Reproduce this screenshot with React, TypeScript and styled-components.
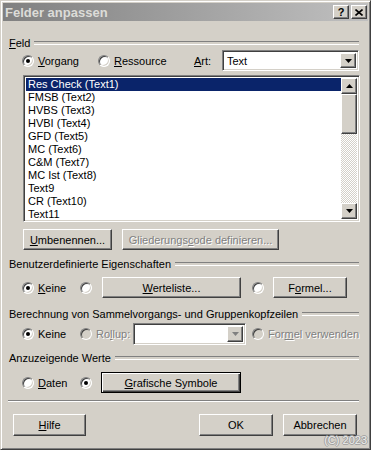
import React, { ReactElement } from 'react';
import styled, { createGlobalStyle, css } from 'styled-components';

const FACE = '#d4d0c8';

const GlobalStyle = createGlobalStyle`
  html, body {
    margin: 0;
    padding: 0;
    background: ${FACE};
  }
  body {
    font-family: "Liberation Sans", Arial, sans-serif;
    font-size: 11px;
    color: #000;
  }
  * {
    box-sizing: border-box;
  }
`;

const raised = css`
  border: 1px solid;
  border-color: #fff #404040 #404040 #fff;
  box-shadow: inset -1px -1px #808080;
  background: ${FACE};
`;

const sunken = css`
  border: 1px solid;
  border-color: #808080 #fff #fff #808080;
  box-shadow: inset 1px 1px #404040, inset -1px -1px ${FACE};
`;

const grayText = css`
  color: #808080;
  text-shadow: 1px 1px #fff;
`;

const Window = styled.div`
  position: relative;
  width: 371px;
  height: 450px;
  background: ${FACE};
  border: 1px solid;
  border-color: ${FACE} #404040 #404040 ${FACE};
  box-shadow: inset 1px 1px #fff, inset -1px -1px #808080;
  padding: 2px;
  display: flex;
  flex-direction: column;
`;

const TitleBar = styled.div`
  height: 18px;
  display: flex;
  align-items: center;
  gap: 2px;
  padding: 0 1px 0 2px;
  background: linear-gradient(to right, #808080, #c0c0c0);
`;

const Title = styled.span`
  flex: 1;
  color: #dcdcd8;
  font-weight: bold;
  font-size: 13px;
`;

const CaptionButton = styled.div`
  ${raised};
  width: 16px;
  height: 14px;
  display: flex;
  align-items: center;
  justify-content: center;
  font-weight: bold;
  font-size: 11px;
  line-height: 1;
`;

const Body = styled.div`
  flex: 1;
  display: flex;
  flex-direction: column;
  padding: 0 9px 0 6px;
`;

const GroupHeader = styled.div<{ $top: number }>`
  display: flex;
  align-items: center;
  height: 13px;
  margin-top: ${p => p.$top}px;
  white-space: nowrap;

  &::after {
    content: '';
    flex: 1;
    height: 2px;
    margin-left: 4px;
    border-top: 1px solid #808080;
    border-bottom: 1px solid #fff;
  }
`;

const Row = styled.div<{ $top: number; $h?: number; $indent?: number }>`
  display: flex;
  align-items: center;
  height: ${p => p.$h ?? 21}px;
  margin-top: ${p => p.$top}px;
  padding-left: ${p => p.$indent ?? 13}px;
  white-space: nowrap;
`;

const Accel = styled.span`
  text-decoration: underline;
  text-underline-offset: 1px;
`;

const Option = styled.label<{ $w?: number; $gap?: number; $disabled?: boolean }>`
  display: flex;
  align-items: center;
  gap: 4px;
  flex: none;
  width: ${p => (p.$w ? `${p.$w}px` : 'auto')};
  margin-left: ${p => p.$gap ?? 0}px;
  ${p => p.$disabled && grayText};
`;

const RadioDot = styled.span<{ $checked?: boolean; $disabled?: boolean }>`
  position: relative;
  flex: none;
  width: 12px;
  height: 12px;
  border-radius: 50%;
  border: 1px solid;
  border-color: #808080 #fff #fff #808080;
  background: ${p => (p.$disabled ? FACE : '#fff')};
  box-shadow: inset 1px 1px #404040, inset -1px -1px ${FACE};
  text-shadow: none;

  ${p =>
    p.$checked &&
    css`
      &::after {
        content: '';
        position: absolute;
        left: 3px;
        top: 3px;
        width: 4px;
        height: 4px;
        border-radius: 50%;
        background: #000;
      }
    `}
`;

const PushButton = styled.button<{ $w: number; $default?: boolean; $gap?: number }>`
  ${raised};
  width: ${p => p.$w}px;
  height: 100%;
  margin: 0 0 0 ${p => p.$gap ?? 0}px;
  padding: 0;
  font: inherit;
  color: #000;
  flex: none;

  ${p =>
    p.$default &&
    css`
      border: 1px solid #000;
      box-shadow: inset 1px 1px #fff, inset -1px -1px #404040, inset -2px -2px #808080;
    `}

  &:disabled {
    ${grayText};
  }
`;

const FieldLabel = styled.span<{ $w: number }>`
  width: ${p => p.$w}px;
  flex: none;
`;

const Combo = styled.div<{ $w: number }>`
  ${sunken};
  display: flex;
  align-items: stretch;
  width: ${p => p.$w}px;
  height: 100%;
  padding: 2px;
  background: #fff;
  flex: none;
`;

const ComboText = styled.span`
  flex: 1;
  padding-left: 2px;
  display: flex;
  align-items: center;
`;

const ArrowButton = styled.div<{ $h?: number }>`
  ${raised};
  width: 16px;
  height: ${p => (p.$h ? `${p.$h}px` : 'auto')};
  flex: none;
  display: flex;
  align-items: center;
  justify-content: center;
`;

const ListBox = styled.div`
  ${sunken};
  display: flex;
  width: 337px;
  height: 147px;
  margin: 4px 0 0 14px;
  padding: 2px;
  background: #fff;
`;

const Items = styled.div`
  flex: 1;
  overflow: hidden;
`;

const Item = styled.div<{ $selected?: boolean }>`
  height: 13px;
  line-height: 13px;
  padding-left: 2px;
  white-space: nowrap;
  background: ${p => (p.$selected ? '#0a246a' : 'transparent')};
  color: ${p => (p.$selected ? '#fff' : '#000')};
`;

const ScrollBar = styled.div`
  width: 16px;
  display: flex;
  flex-direction: column;
`;

const Thumb = styled.div`
  ${raised};
  height: 40px;
`;

const Track = styled.div`
  flex: 1;
  background-image: conic-gradient(#fff 25%, ${FACE} 0 50%, #fff 0 75%, ${FACE} 0);
  background-size: 2px 2px;
`;

const Separator = styled.div`
  height: 2px;
  margin: 7px 0 0 -1px;
  border-top: 1px solid #808080;
  border-bottom: 1px solid #fff;
`;

const RightGroup = styled.div`
  display: flex;
  gap: 10px;
  height: 100%;
  margin: 0 2px 0 auto;
`;

const Watermark = styled.span`
  position: absolute;
  right: 3px;
  bottom: 3px;
  font-size: 11px;
  color: #eeeeec;
  text-shadow: 1px 0 #a0a0a0, -1px 0 #a0a0a0, 0 1px #a0a0a0, 0 -1px #a0a0a0;
`;

function Arrow({ up, disabled }: { up?: boolean; disabled?: boolean }): ReactElement {
  return (
    <svg width='7' height='4' viewBox='0 0 7 4'>
      <polygon
        points={up ? '3.5,0 7,4 0,4' : '0,0 7,0 3.5,4'}
        fill={disabled ? '#808080' : '#000'}
      />
    </svg>
  );
}

const items = [
  'Res Check (Text1)',
  'FMSB (Text2)',
  'HVBS (Text3)',
  'HVBI (Text4)',
  'GFD (Text5)',
  'MC (Text6)',
  'C&M (Text7)',
  'MC Ist (Text8)',
  'Text9',
  'CR (Text10)',
  'Text11',
];

export default function App(): ReactElement {
  return (
    <>
      <GlobalStyle />
      <Window>
        <TitleBar>
          <Title>Felder anpassen</Title>
          <CaptionButton>?</CaptionButton>
          <CaptionButton>
            <svg width='8' height='7' viewBox='0 0 8 7'>
              <path d='M0.5 0.5 L7.5 6.5 M7.5 0.5 L0.5 6.5' stroke='#000' strokeWidth='1.6' />
            </svg>
          </CaptionButton>
        </TitleBar>

        <Body>
          <GroupHeader $top={15}>
            <span>
              <Accel>F</Accel>eld
            </span>
          </GroupHeader>

          <Row $top={1}>
            <Option $w={76}>
              <RadioDot $checked />
              <span>
                <Accel>V</Accel>organg
              </span>
            </Option>
            <Option $w={96}>
              <RadioDot />
              <span>
                <Accel>R</Accel>essource
              </span>
            </Option>
            <FieldLabel $w={28}>
              <Accel>A</Accel>rt:
            </FieldLabel>
            <Combo $w={137}>
              <ComboText>Text</ComboText>
              <ArrowButton>
                <Arrow />
              </ArrowButton>
            </Combo>
          </Row>

          <ListBox>
            <Items>
              {items.map((name, i) => (
                <Item key={name} $selected={i === 0}>
                  {name}
                </Item>
              ))}
            </Items>
            <ScrollBar>
              <ArrowButton $h={16}>
                <Arrow up />
              </ArrowButton>
              <Thumb />
              <Track />
              <ArrowButton $h={16}>
                <Arrow />
              </ArrowButton>
            </ScrollBar>
          </ListBox>

          <Row $top={7} $indent={14}>
            <PushButton $w={89}>
              <Accel>U</Accel>mbenennen...
            </PushButton>
            <PushButton $w={157} $gap={10} disabled>
              Gliederungs<Accel>c</Accel>ode definieren...
            </PushButton>
          </Row>

          <GroupHeader $top={7}>
            <span>Benutzerdefinierte Eigenschaften</span>
          </GroupHeader>

          <Row $top={7}>
            <Option $w={58}>
              <RadioDot $checked />
              <span>
                <Accel>K</Accel>eine
              </span>
            </Option>
            <Option $w={22}>
              <RadioDot />
            </Option>
            <PushButton $w={139}>
              <Accel>W</Accel>erteliste...
            </PushButton>
            <Option $w={21} $gap={11}>
              <RadioDot />
            </Option>
            <PushButton $w={74}>
              F<Accel>o</Accel>rmel...
            </PushButton>
          </Row>

          <GroupHeader $top={9}>
            <span>Berechnung von Sammelvorgangs- und Gruppenkopfzeilen</span>
          </GroupHeader>

          <Row $top={3} $h={22}>
            <Option $w={58}>
              <RadioDot $checked />
              <span>Keine</span>
            </Option>
            <Option $w={53} $disabled>
              <RadioDot $disabled />
              <span>
                Ro<Accel>l</Accel>lup:
              </span>
            </Option>
            <Combo $w={113}>
              <ComboText />
              <ArrowButton>
                <Arrow disabled />
              </ArrowButton>
            </Combo>
            <Option $gap={6} $disabled>
              <RadioDot $disabled />
              <span>
                For<Accel>m</Accel>el verwenden
              </span>
            </Option>
          </Row>

          <GroupHeader $top={6}>
            <span>Anzuzeigende Werte</span>
          </GroupHeader>

          <Row $top={8}>
            <Option $w={58}>
              <RadioDot />
              <span>
                <Accel>D</Accel>aten
              </span>
            </Option>
            <Option $w={21}>
              <RadioDot $checked />
            </Option>
            <PushButton $w={140} $default>
              <Accel>G</Accel>rafische Symbole
            </PushButton>
          </Row>

          <Separator />

          <Row $top={12} $h={22} $indent={4}>
            <PushButton $w={73}>
              <Accel>H</Accel>ilfe
            </PushButton>
            <RightGroup>
              <PushButton $w={74}>OK</PushButton>
              <PushButton $w={74}>Abbrechen</PushButton>
            </RightGroup>
          </Row>
        </Body>

        <Watermark>(C) 2023</Watermark>
      </Window>
    </>
  );
}
